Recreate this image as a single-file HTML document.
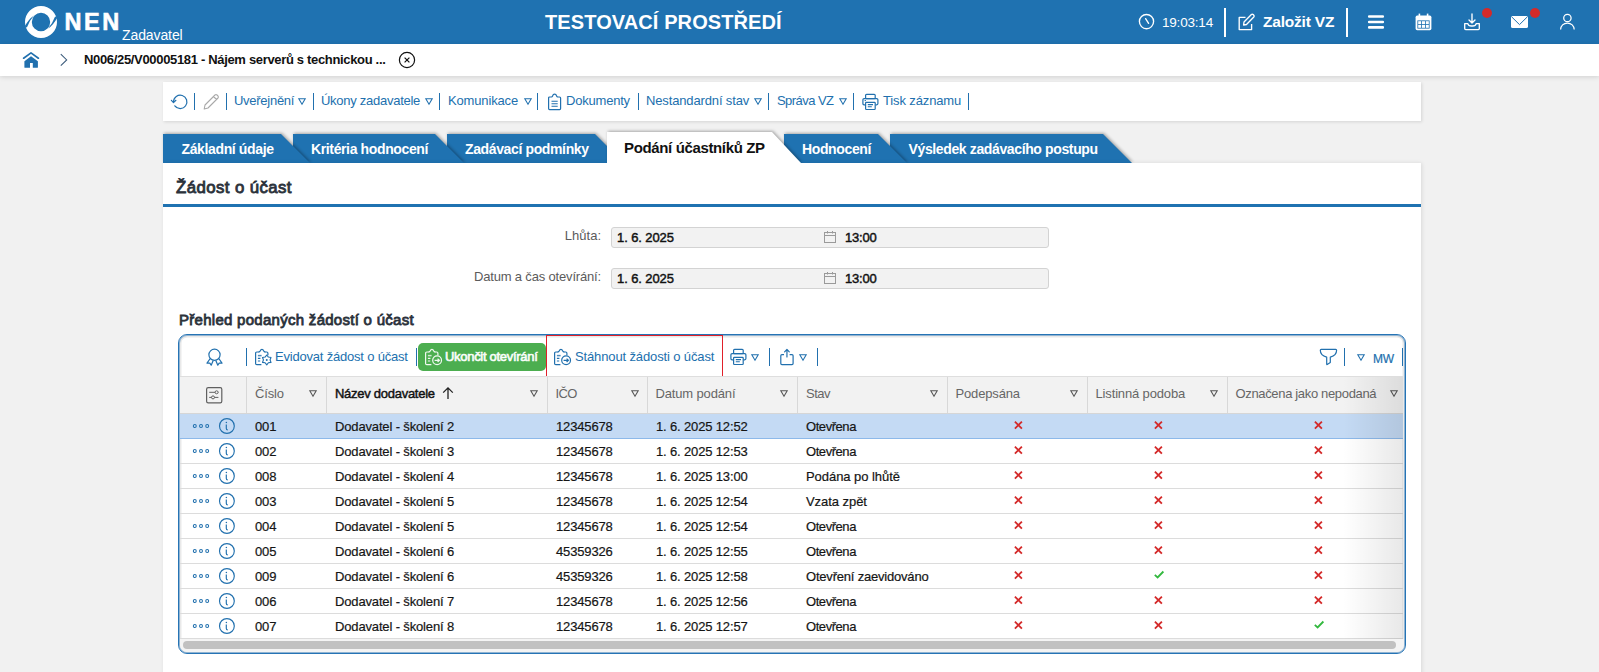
<!DOCTYPE html>
<html><head><meta charset="utf-8">
<style>
*{box-sizing:border-box;margin:0;padding:0}
html,body{width:1599px;height:672px;overflow:hidden}
body{background:#f1f1f1;font-family:"Liberation Sans",sans-serif;position:relative;color:#222}
.abs{position:absolute}
.t{white-space:nowrap}
svg{overflow:visible}
</style></head>
<body>
<div class="abs" style="left:0;top:0;width:1599px;height:44px;background:#1f72b1"></div><svg class="abs" style="left:24px;top:5px" width="34" height="34" viewBox="0 0 34 34">
<circle cx="17" cy="17" r="12.6" fill="none" stroke="#fff" stroke-width="6.8"/>
<path d="M10 10.4 Q4.6 14 0.6 21.6 L2.9 22.4 Q5.6 15.2 10 10.4 Z" fill="#1f72b1"/>
<path d="M24 23.6 Q29.4 20 33.4 12.4 L31.1 11.6 Q28.4 18.8 24 23.6 Z" fill="#1f72b1"/>
</svg><div class="abs t" style="left:64.5px;top:9.36px;font-size:23.5px;line-height:27px;color:#fff;font-weight:bold;letter-spacing:2.6px;-webkit-text-stroke:0.6px #fff;">NEN</div><div class="abs t" style="left:122px;top:27.15px;font-size:14px;line-height:16px;color:#fff;font-weight:normal;letter-spacing:-0.1px;">Zadavatel</div><div class="abs t" style="left:545px;top:10.77px;font-size:20px;line-height:23px;color:#fff;font-weight:bold;letter-spacing:0.1px;">TESTOVACÍ PROSTŘEDÍ</div><svg class="abs" style="left:1138px;top:13px" width="17" height="17" viewBox="0 0 17 17">
<circle cx="8.5" cy="8.6" r="7.1" fill="none" stroke="#fff" stroke-width="1.35"/>
<path d="M7.6 5.6 L10.6 10.4" fill="none" stroke="#fff" stroke-width="1.35" stroke-linecap="round"/>
</svg><div class="abs t" style="left:1162px;top:15.32px;font-size:13.5px;line-height:16px;color:#fff;font-weight:normal;letter-spacing:-0.2px;">19:03:14</div><div class="abs" style="left:1224px;top:8px;width:2px;height:29px;background:#fff"></div><svg class="abs" style="left:1238px;top:13px" width="18" height="18" viewBox="0 0 18 18">
<path d="M7.5 4.4 H1.2 V16.6 H13.6 V11" fill="none" stroke="#fff" stroke-width="1.35" stroke-linejoin="round"/>
<path d="M5.6 12 L6 9 L13.4 1.6 Q14.3 0.8 15.2 1.6 L15.8 2.2 Q16.6 3.1 15.8 4 L8.5 11.5 Z" fill="none" stroke="#fff" stroke-width="1.35" stroke-linejoin="round"/>
</svg><div class="abs t" style="left:1263px;top:12.63px;font-size:15.5px;line-height:18px;color:#fff;font-weight:bold;letter-spacing:-0.2px;">Založit VZ</div><div class="abs" style="left:1346px;top:8px;width:2px;height:29px;background:#fff"></div><svg class="abs" style="left:1367px;top:14px" width="18" height="16" viewBox="0 0 18 16">
<path d="M2.2 2.5 H15.8 M2.2 8 H15.8 M2.2 13.4 H15.8" stroke="#fff" stroke-width="2.6" stroke-linecap="round"/>
</svg><svg class="abs" style="left:1414px;top:13px" width="19" height="18" viewBox="0 0 19 18">
<rect x="1.6" y="2.6" width="15.8" height="14.6" rx="1.6" fill="#fff"/>
<rect x="4.6" y="0.6" width="1.6" height="4" fill="#fff"/><rect x="12.8" y="0.6" width="1.6" height="4" fill="#fff"/>
<rect x="3.4" y="7.4" width="12.2" height="8.2" fill="#1f72b1"/>
<g fill="#fff"><rect x="4.2" y="8.2" width="3" height="3"/><rect x="8" y="8.2" width="3" height="3"/><rect x="11.8" y="8.2" width="3" height="3"/>
<rect x="4.2" y="12" width="3" height="2.8"/><rect x="8" y="12" width="3" height="2.8"/><rect x="11.8" y="12" width="3" height="2.8"/></g>
</svg><svg class="abs" style="left:1463px;top:13px" width="18" height="18" viewBox="0 0 18 18">
<path d="M9 1 V10 M6 7 L9 10 L12 7" fill="none" stroke="#fff" stroke-width="1.35" stroke-linecap="round" stroke-linejoin="round"/>
<path d="M1.7 10.6 V15.6 Q1.7 16.6 2.7 16.6 H15.3 Q16.3 16.6 16.3 15.6 V10.6 H13.2 Q12.6 13 9.6 13 H8.4 Q5.4 13 4.8 10.6 Z" fill="none" stroke="#fff" stroke-width="1.35" stroke-linejoin="round"/>
</svg><div class="abs" style="left:1482px;top:8px;width:10px;height:10px;border-radius:50%;background:#d32a2a"></div><svg class="abs" style="left:1510px;top:15px" width="19" height="14" viewBox="0 0 19 14">
<rect x="1" y="1" width="17" height="12" rx="1.6" fill="#fff"/>
<path d="M1.6 1.8 L9.5 9.6 L17.4 1.8" fill="none" stroke="#1f72b1" stroke-width="1"/>
</svg><div class="abs" style="left:1530px;top:8px;width:10px;height:10px;border-radius:50%;background:#d32a2a"></div><svg class="abs" style="left:1559px;top:13px" width="18" height="18" viewBox="0 0 18 18">
<circle cx="8.4" cy="5" r="3.7" fill="none" stroke="#fff" stroke-width="1.25"/>
<path d="M1.6 16.5 A6.8 6.5 0 0 1 15.2 16.5" fill="none" stroke="#fff" stroke-width="1.25"/>
</svg><div class="abs" style="left:0;top:44px;width:1599px;height:32px;background:#fff;box-shadow:0 1px 5px rgba(0,0,0,.14)"></div><svg class="abs" style="left:22px;top:51px" width="18" height="18" viewBox="0 0 18 18">
<path d="M1.6 7.2 L9 1.9 L16.4 7.2" fill="none" stroke="#2170ae" stroke-width="1.7" stroke-linecap="round" stroke-linejoin="round"/>
<path d="M2.4 10.2 L9 5.2 L15.9 10.2 V16.2 Q15.9 16.8 15.3 16.8 H10.8 V12 H8 V16.8 H3 Q2.4 16.8 2.4 16.2 Z" fill="#2170ae"/>
</svg><svg class="abs" style="left:59px;top:53px" width="10" height="14" viewBox="0 0 10 14">
<path d="M1.8 1.1 L7.7 7 L1.8 12.6" fill="none" stroke="#3a5a7a" stroke-width="1.05"/>
</svg><div class="abs t" style="left:84px;top:51.70px;font-size:13px;line-height:15px;color:#111;font-weight:bold;letter-spacing:-0.33px;">N006/25/V00005181 - Nájem serverů s technickou ...</div><svg class="abs" style="left:398px;top:51px" width="18" height="18" viewBox="0 0 18 18">
<circle cx="9" cy="9" r="7.6" fill="none" stroke="#111" stroke-width="1.2"/>
<path d="M6.6 6.6 L11.4 11.4 M11.4 6.6 L6.6 11.4" stroke="#111" stroke-width="1.2"/>
</svg><div class="abs" style="left:163px;top:82px;width:1258px;height:39px;background:#fff;box-shadow:1px 1px 3px rgba(0,0,0,.12)"></div><svg class="abs" style="left:170px;top:93px" width="18" height="18" viewBox="0 0 18 18">
<path d="M3.5 8.8 A6.7 6.7 0 1 1 4.8 12.8" fill="none" stroke="#2170ae" stroke-width="1.2" stroke-linecap="round"/>
<path d="M1.4 7.3 L3.5 9.6 L5.9 7.3" fill="none" stroke="#2170ae" stroke-width="1.2" stroke-linecap="round" stroke-linejoin="round"/>
</svg><div class="abs" style="left:194px;top:93px;width:1px;height:17px;background:#2170ae"></div><svg class="abs" style="left:202px;top:93px" width="18" height="18" viewBox="0 0 18 18">
<path d="M2.2 16 L3 12 L13 2 Q14 1.1 15 2 L16 3 Q16.9 4 16 5 L6 15 Z M11.5 3.5 L14.5 6.5" fill="none" stroke="#a9a9a9" stroke-width="1.1" stroke-linejoin="round"/>
</svg><div class="abs" style="left:226px;top:93px;width:1px;height:17px;background:#2170ae"></div><div class="abs t" style="left:234px;top:93.00px;font-size:13px;line-height:15px;color:#2170ae;font-weight:normal;letter-spacing:-0.27px;">Uveřejnění</div><svg class="abs" style="left:298px;top:98px" width="8" height="7" viewBox="0 0 8 7"><path d="M0.8 0.8 H7.2 L4.0 6.2 Z" fill="none" stroke="#2170ae" stroke-width="1.05" stroke-linejoin="miter"/></svg><div class="abs" style="left:313px;top:93px;width:1px;height:17px;background:#2170ae"></div><div class="abs t" style="left:321px;top:93.00px;font-size:13px;line-height:15px;color:#2170ae;font-weight:normal;letter-spacing:-0.27px;">Úkony zadavatele</div><svg class="abs" style="left:425px;top:98px" width="8" height="7" viewBox="0 0 8 7"><path d="M0.8 0.8 H7.2 L4.0 6.2 Z" fill="none" stroke="#2170ae" stroke-width="1.05" stroke-linejoin="miter"/></svg><div class="abs" style="left:439px;top:93px;width:1px;height:17px;background:#2170ae"></div><div class="abs t" style="left:448px;top:93.00px;font-size:13px;line-height:15px;color:#2170ae;font-weight:normal;letter-spacing:-0.15px;">Komunikace</div><svg class="abs" style="left:524px;top:98px" width="8" height="7" viewBox="0 0 8 7"><path d="M0.8 0.8 H7.2 L4.0 6.2 Z" fill="none" stroke="#2170ae" stroke-width="1.05" stroke-linejoin="miter"/></svg><div class="abs" style="left:537px;top:93px;width:1px;height:17px;background:#2170ae"></div><svg class="abs" style="left:547px;top:93px" width="16" height="18" viewBox="0 0 16 18">
<path d="M4.4 4 H2.6 Q1.6 4 1.6 5 V15.6 Q1.6 16.6 2.6 16.6 H12.6 Q13.6 16.6 13.6 15.6 V5 Q13.6 4 12.6 4 H10.8" fill="none" stroke="#2170ae" stroke-width="1.2"/>
<path d="M4.2 4 Q5.3 4 5.6 3 Q6.1 1.2 7.6 1.2 Q9.1 1.2 9.6 3 Q9.9 4 11 4" fill="none" stroke="#2170ae" stroke-width="1.2"/>
<path d="M4.5 8.3 H10.7 M4.5 10.8 H10.7 M4.5 13.3 H10.7" stroke="#2170ae" stroke-width="1.1"/>
</svg><div class="abs t" style="left:566px;top:93.00px;font-size:13px;line-height:15px;color:#2170ae;font-weight:normal;letter-spacing:-0.21px;">Dokumenty</div><div class="abs" style="left:638px;top:93px;width:1px;height:17px;background:#2170ae"></div><div class="abs t" style="left:646px;top:93.00px;font-size:13px;line-height:15px;color:#2170ae;font-weight:normal;letter-spacing:-0.14px;">Nestandardní stav</div><svg class="abs" style="left:754px;top:98px" width="8" height="7" viewBox="0 0 8 7"><path d="M0.8 0.8 H7.2 L4.0 6.2 Z" fill="none" stroke="#2170ae" stroke-width="1.05" stroke-linejoin="miter"/></svg><div class="abs" style="left:768px;top:93px;width:1px;height:17px;background:#2170ae"></div><div class="abs t" style="left:777px;top:93.00px;font-size:13px;line-height:15px;color:#2170ae;font-weight:normal;letter-spacing:-0.55px;">Správa VZ</div><svg class="abs" style="left:839px;top:98px" width="8" height="7" viewBox="0 0 8 7"><path d="M0.8 0.8 H7.2 L4.0 6.2 Z" fill="none" stroke="#2170ae" stroke-width="1.05" stroke-linejoin="miter"/></svg><div class="abs" style="left:853px;top:93px;width:1px;height:17px;background:#2170ae"></div><svg class="abs" style="left:862px;top:93px" width="17" height="18" viewBox="0 0 17 18"><rect x="3.6" y="1.3" width="9.6" height="4.4" rx="1" fill="none" stroke="#2170ae" stroke-width="1.2"/><path d="M3.5 11.8 H2.1 Q0.9 11.8 0.9 10.6 V6.8 Q0.9 5.6 2.1 5.6 H14.7 Q15.9 5.6 15.9 6.8 V10.6 Q15.9 11.8 14.7 11.8 H13.3" fill="none" stroke="#2170ae" stroke-width="1.2"/><rect x="3.6" y="9.3" width="9.6" height="7.2" rx="0.8" fill="#fff" stroke="#2170ae" stroke-width="1.2"/><path d="M5.8 11.6 H11 M5.8 13.8 H9.8" stroke="#2170ae" stroke-width="1.1"/><path d="M2.6 7.6 H4" stroke="#2170ae" stroke-width="1"/></svg><div class="abs t" style="left:883px;top:93.00px;font-size:13px;line-height:15px;color:#2170ae;font-weight:normal;letter-spacing:-0.13px;">Tisk záznamu</div><div class="abs" style="left:968px;top:93px;width:1px;height:17px;background:#2170ae"></div><svg class="abs" style="left:163px;top:134px;z-index:20;filter:drop-shadow(1.5px -1px 1.5px rgba(0,0,0,.3))" width="147" height="29" viewBox="0 0 147 29"><path d="M0 0 H118 L147 29 H0 Z" fill="#1f72b1"/></svg><div class="abs t" style="left:181.5px;top:141.15px;font-size:14px;line-height:16px;color:#fff;font-weight:bold;letter-spacing:-0.37px;z-index:21">Základní údaje</div><svg class="abs" style="left:293px;top:134px;z-index:19;filter:drop-shadow(1.5px -1px 1.5px rgba(0,0,0,.3))" width="171" height="29" viewBox="0 0 171 29"><path d="M0 0 H142 L171 29 H0 Z" fill="#1f72b1"/></svg><div class="abs t" style="left:311px;top:141.15px;font-size:14px;line-height:16px;color:#fff;font-weight:bold;letter-spacing:-0.37px;z-index:20">Kritéria hodnocení</div><svg class="abs" style="left:447px;top:134px;z-index:18;filter:drop-shadow(1.5px -1px 1.5px rgba(0,0,0,.3))" width="177" height="29" viewBox="0 0 177 29"><path d="M0 0 H148 L177 29 H0 Z" fill="#1f72b1"/></svg><div class="abs t" style="left:465px;top:141.15px;font-size:14px;line-height:16px;color:#fff;font-weight:bold;letter-spacing:-0.37px;z-index:19">Zadávací podmínky</div><svg class="abs" style="left:607px;top:132px;z-index:50;filter:drop-shadow(1.5px -1px 1.5px rgba(0,0,0,.3))" width="194" height="31" viewBox="0 0 194 31"><path d="M0 0 H165 L194 31 H0 Z" fill="#fff"/></svg><div class="abs t" style="left:624px;top:139.30px;font-size:15px;line-height:17px;color:#111;font-weight:bold;letter-spacing:-0.36px;z-index:51">Podání účastníků ZP</div><svg class="abs" style="left:784px;top:134px;z-index:16;filter:drop-shadow(1.5px -1px 1.5px rgba(0,0,0,.3))" width="123" height="29" viewBox="0 0 123 29"><path d="M0 0 H94 L123 29 H0 Z" fill="#1f72b1"/></svg><div class="abs t" style="left:802px;top:141.15px;font-size:14px;line-height:16px;color:#fff;font-weight:bold;letter-spacing:-0.37px;z-index:17">Hodnocení</div><svg class="abs" style="left:890px;top:134px;z-index:15;filter:drop-shadow(1.5px -1px 1.5px rgba(0,0,0,.3))" width="242" height="29" viewBox="0 0 242 29"><path d="M0 0 H213 L242 29 H0 Z" fill="#1f72b1"/></svg><div class="abs t" style="left:908.5px;top:141.15px;font-size:14px;line-height:16px;color:#fff;font-weight:bold;letter-spacing:-0.37px;z-index:16">Výsledek zadávacího postupu</div><div class="abs" style="left:600px;top:163px;width:215px;height:4px;background:#fff;z-index:52"></div><div class="abs" style="left:163px;top:163px;width:1258px;height:520px;background:#fff;box-shadow:1px 0 4px rgba(0,0,0,.1);z-index:30"></div><div class="abs t" style="z-index:40;left:176px;top:178.43px;font-size:16.8px;line-height:19px;color:#2b323b;font-weight:normal;letter-spacing:0.42px;-webkit-text-stroke:0.85px #2b323b;">Žádost o účast</div><div class="abs" style="z-index:40;left:163px;top:204px;width:1258px;height:3px;background:#1f72b1"></div><div class="abs t" style="z-index:40;right:998px;top:228.30px;font-size:13px;line-height:15px;color:#5b5b5b;font-weight:normal;letter-spacing:0px;text-align:right">Lhůta:</div><div class="abs t" style="z-index:40;right:998px;top:268.80px;font-size:13px;line-height:15px;color:#5b5b5b;font-weight:normal;letter-spacing:-0.17px;text-align:right">Datum a čas otevírání:</div><div class="abs" style="z-index:40;left:611px;top:227px;width:438px;height:21px;background:#f2f2f2;border:1px solid #d3d3d3;border-radius:3px"></div><div class="abs t" style="z-index:40;left:617px;top:229.80px;font-size:13px;line-height:15px;color:#111;font-weight:normal;letter-spacing:-0.1px;-webkit-text-stroke:0.45px #111;">1. 6. 2025</div><svg class="abs" style="z-index:40;left:823px;top:230px" width="14" height="14" viewBox="0 0 14 14"><rect x="1.5" y="2.5" width="11" height="10" fill="none" stroke="#9a9a9a" stroke-width="1"/><path d="M1.5 5.5 H12.5 M4.5 1 V3.5 M9.5 1 V3.5" stroke="#9a9a9a" stroke-width="1"/></svg><div class="abs t" style="z-index:40;left:845px;top:229.80px;font-size:13px;line-height:15px;color:#111;font-weight:normal;letter-spacing:-0.2px;-webkit-text-stroke:0.45px #111;">13:00</div><div class="abs" style="z-index:40;left:611px;top:268px;width:438px;height:21px;background:#f2f2f2;border:1px solid #d3d3d3;border-radius:3px"></div><div class="abs t" style="z-index:40;left:617px;top:271.00px;font-size:13px;line-height:15px;color:#111;font-weight:normal;letter-spacing:-0.1px;-webkit-text-stroke:0.45px #111;">1. 6. 2025</div><svg class="abs" style="z-index:40;left:823px;top:271px" width="14" height="14" viewBox="0 0 14 14"><rect x="1.5" y="2.5" width="11" height="10" fill="none" stroke="#9a9a9a" stroke-width="1"/><path d="M1.5 5.5 H12.5 M4.5 1 V3.5 M9.5 1 V3.5" stroke="#9a9a9a" stroke-width="1"/></svg><div class="abs t" style="z-index:40;left:845px;top:271.00px;font-size:13px;line-height:15px;color:#111;font-weight:normal;letter-spacing:-0.2px;-webkit-text-stroke:0.45px #111;">13:00</div><div class="abs t" style="z-index:40;left:179px;top:311.00px;font-size:15px;line-height:17px;color:#2b323b;font-weight:normal;letter-spacing:0.28px;-webkit-text-stroke:0.8px #2b323b;">Přehled podaných žádostí o účast</div><div class="abs" style="z-index:40;left:178px;top:334px;width:1228px;height:320px;border:1px solid #2674b5;border-radius:9px;background:#fff;overflow:hidden;box-shadow:inset 0 0 0 1px rgba(38,116,181,.45),inset 0 0 0 2.5px #e9e9e9"></div><svg class="abs" style="z-index:40;left:205px;top:348px" width="19" height="18" viewBox="0 0 19 18"><circle cx="9.5" cy="6.8" r="5.6" fill="none" stroke="#2170ae" stroke-width="1.2"/><path d="M5.2 10.5 L2 15.2 L4.8 15.2 L6.2 17.2 L8.2 12.6 M13.8 10.5 L17 15.2 L14.2 15.2 L12.8 17.2 L10.8 12.6" fill="none" stroke="#2170ae" stroke-width="1.2" stroke-linejoin="round"/></svg><div class="abs" style="z-index:40;left:246px;top:348px;width:1px;height:18px;background:#2170ae"></div><svg class="abs" style="z-index:40;left:254px;top:348px" width="19" height="18" viewBox="0 0 19 18"><path d="M5.2 4 H2.8 Q1.6 4 1.6 5.2 V15.5 Q1.6 16.7 2.8 16.7 H7.4" fill="none" stroke="#2170ae" stroke-width="1.2"/><path d="M10.6 4 H12.7 Q13.9 4 13.9 5.2 V7.2" fill="none" stroke="#2170ae" stroke-width="1.2"/><path d="M4.6 4 Q5.8 4 6.3 2.8 Q6.8 1.3 7.95 1.3 Q9.1 1.3 9.6 2.8 Q10.1 4 11.3 4" fill="none" stroke="#2170ae" stroke-width="1.2"/><path d="M3.9 7.6 H7.6" stroke="#2170ae" stroke-width="1.5" opacity=".8"/><path d="M3.9 10.4 H6.4 M3.9 13 H6.2" stroke="#2170ae" stroke-width="1.2"/><path d="M12.75 7.00 L14.40 9.04 L16.99 9.45 L16.05 11.90 L16.99 14.35 L14.40 14.76 L12.75 16.80 L11.10 14.76 L8.51 14.35 L9.45 11.90 L8.51 9.45 L11.10 9.04 Z" fill="none" stroke="#2170ae" stroke-width="1.15" stroke-linejoin="round"/><circle cx="12.75" cy="11.9" r="1" fill="#2170ae"/></svg><div class="abs t" style="z-index:40;left:275px;top:349.00px;font-size:13px;line-height:15px;color:#2170ae;font-weight:normal;letter-spacing:-0.2px;">Evidovat žádost o účast</div><div class="abs" style="z-index:40;left:416px;top:348px;width:1px;height:18px;background:#2170ae"></div><div class="abs" style="z-index:40;left:418px;top:343px;width:128px;height:28px;background:#4cae50;border-radius:5px"></div><svg class="abs" style="z-index:40;left:424px;top:348px" width="19" height="18" viewBox="0 0 19 18"><path d="M5.2 4 H2.8 Q1.6 4 1.6 5.2 V15.5 Q1.6 16.7 2.8 16.7 H7.4" fill="none" stroke="rgba(255,255,255,.92)" stroke-width="1.2"/><path d="M10.6 4 H12.7 Q13.9 4 13.9 5.2 V7.2" fill="none" stroke="rgba(255,255,255,.92)" stroke-width="1.2"/><path d="M4.6 4 Q5.8 4 6.3 2.8 Q6.8 1.3 7.95 1.3 Q9.1 1.3 9.6 2.8 Q10.1 4 11.3 4" fill="none" stroke="rgba(255,255,255,.92)" stroke-width="1.2"/><path d="M3.9 7.6 H7.6" stroke="rgba(255,255,255,.92)" stroke-width="1.5" opacity=".8"/><path d="M3.9 10.4 H6.4 M3.9 13 H6.2" stroke="rgba(255,255,255,.92)" stroke-width="1.2"/><circle cx="13.1" cy="12.3" r="4.4" fill="none" stroke="rgba(255,255,255,.92)" stroke-width="1.2"/><path d="M10.6 12.3 H15.4 M13.6 10.6 L15.4 12.3 L13.6 14" fill="none" stroke="rgba(255,255,255,.92)" stroke-width="1.2"/></svg><div class="abs t" style="z-index:40;left:445px;top:349.00px;font-size:13px;line-height:15px;color:rgba(255,255,255,.93);font-weight:normal;letter-spacing:-0.3px;-webkit-text-stroke:0.7px rgba(255,255,255,.93);">Ukončit otevírání</div><div class="abs" style="z-index:40;left:546px;top:335px;width:177px;height:42px;border:1px solid #e0202a"></div><svg class="abs" style="z-index:40;left:553px;top:348px" width="19" height="18" viewBox="0 0 19 18"><path d="M5.2 4 H2.8 Q1.6 4 1.6 5.2 V15.5 Q1.6 16.7 2.8 16.7 H7.4" fill="none" stroke="#2170ae" stroke-width="1.2"/><path d="M10.6 4 H12.7 Q13.9 4 13.9 5.2 V7.2" fill="none" stroke="#2170ae" stroke-width="1.2"/><path d="M4.6 4 Q5.8 4 6.3 2.8 Q6.8 1.3 7.95 1.3 Q9.1 1.3 9.6 2.8 Q10.1 4 11.3 4" fill="none" stroke="#2170ae" stroke-width="1.2"/><path d="M3.9 7.6 H7.6" stroke="#2170ae" stroke-width="1.5" opacity=".8"/><path d="M3.9 10.4 H6.4 M3.9 13 H6.2" stroke="#2170ae" stroke-width="1.2"/><circle cx="13.1" cy="12.3" r="4.4" fill="none" stroke="#2170ae" stroke-width="1.2"/><path d="M10.6 12.3 H15.4 M13.6 10.6 L15.4 12.3 L13.6 14" fill="none" stroke="#2170ae" stroke-width="1.2"/></svg><div class="abs t" style="z-index:40;left:575px;top:349.00px;font-size:13px;line-height:15px;color:#2170ae;font-weight:normal;letter-spacing:-0.13px;">Stáhnout žádosti o účast</div><svg class="abs" style="z-index:40;left:730px;top:348px" width="17" height="18" viewBox="0 0 17 18"><rect x="3.6" y="1.3" width="9.6" height="4.4" rx="1" fill="none" stroke="#2170ae" stroke-width="1.2"/><path d="M3.5 11.8 H2.1 Q0.9 11.8 0.9 10.6 V6.8 Q0.9 5.6 2.1 5.6 H14.7 Q15.9 5.6 15.9 6.8 V10.6 Q15.9 11.8 14.7 11.8 H13.3" fill="none" stroke="#2170ae" stroke-width="1.2"/><rect x="3.6" y="9.3" width="9.6" height="7.2" rx="0.8" fill="#fff" stroke="#2170ae" stroke-width="1.2"/><path d="M5.8 11.6 H11 M5.8 13.8 H9.8" stroke="#2170ae" stroke-width="1.1"/></svg><svg class="abs" style="z-index:40;left:751px;top:354px" width="8" height="7" viewBox="0 0 8 7"><path d="M0.8 0.8 H7.2 L4.0 6.2 Z" fill="none" stroke="#2170ae" stroke-width="1.05" stroke-linejoin="miter"/></svg><div class="abs" style="z-index:40;left:769px;top:348px;width:1px;height:18px;background:#2170ae"></div><svg class="abs" style="z-index:40;left:780px;top:348px" width="15" height="18" viewBox="0 0 15 18"><path d="M4 6.7 H1.9 Q0.8 6.7 0.8 7.8 V15.6 Q0.8 16.6 1.9 16.6 H12 Q13.1 16.6 13.1 15.6 V7.8 Q13.1 6.7 12 6.7 H9.6" fill="none" stroke="#2170ae" stroke-width="1.2"/><path d="M6.95 9 V1.6 M4.6 3.9 L6.95 1.5 L9.3 3.9" fill="none" stroke="#2170ae" stroke-width="1.2" stroke-linecap="round" stroke-linejoin="round"/></svg><svg class="abs" style="z-index:40;left:799px;top:354px" width="8" height="7" viewBox="0 0 8 7"><path d="M0.8 0.8 H7.2 L4.0 6.2 Z" fill="none" stroke="#2170ae" stroke-width="1.05" stroke-linejoin="miter"/></svg><div class="abs" style="z-index:40;left:817px;top:348px;width:1px;height:18px;background:#2170ae"></div><svg class="abs" style="z-index:40;left:1319px;top:348px" width="19" height="18" viewBox="0 0 19 18"><path d="M2.2 1.4 H16.7 Q17.6 1.4 17.6 2.3 C17.6 6 14.8 8.2 11.3 9.2 V14.6 L8.2 16.5 Q7.7 16.7 7.7 16.1 V9.2 C4.2 8.2 1.3 6 1.3 2.3 Q1.3 1.4 2.2 1.4 Z" fill="none" stroke="#2170ae" stroke-width="1.2" stroke-linejoin="round"/></svg><div class="abs" style="z-index:40;left:1344px;top:348px;width:1px;height:18px;background:#2170ae"></div><svg class="abs" style="z-index:40;left:1357px;top:354px" width="8" height="7" viewBox="0 0 8 7"><path d="M0.8 0.8 H7.2 L4.0 6.2 Z" fill="none" stroke="#2170ae" stroke-width="1.05" stroke-linejoin="miter"/></svg><div class="abs t" style="z-index:40;left:1373px;top:351.84px;font-size:12px;line-height:14px;color:#2170ae;font-weight:normal;letter-spacing:-0.2px;-webkit-text-stroke:0.2px #2170ae;">MW</div><div class="abs" style="z-index:40;left:1402px;top:348px;width:1px;height:18px;background:#2170ae"></div><div class="abs" style="z-index:40;left:180px;top:376px;width:1223px;height:38px;background:#f2f2f2;border-top:1px solid #dedede;border-bottom:1px solid #d6d6d6"></div><div class="abs" style="z-index:40;left:246px;top:377px;width:1px;height:36px;background:#d8d8d8"></div><div class="abs" style="z-index:40;left:326px;top:377px;width:1px;height:36px;background:#d8d8d8"></div><div class="abs" style="z-index:40;left:547px;top:377px;width:1px;height:36px;background:#d8d8d8"></div><div class="abs" style="z-index:40;left:647px;top:377px;width:1px;height:36px;background:#d8d8d8"></div><div class="abs" style="z-index:40;left:797px;top:377px;width:1px;height:36px;background:#d8d8d8"></div><div class="abs" style="z-index:40;left:947px;top:377px;width:1px;height:36px;background:#d8d8d8"></div><div class="abs" style="z-index:40;left:1087px;top:377px;width:1px;height:36px;background:#d8d8d8"></div><div class="abs" style="z-index:40;left:1227px;top:377px;width:1px;height:36px;background:#d8d8d8"></div><svg class="abs" style="z-index:40;left:206px;top:387px" width="17" height="17" viewBox="0 0 17 17"><rect x="0.6" y="0.6" width="15.2" height="15.2" rx="1.6" fill="none" stroke="#606060" stroke-width="1.2"/><path d="M3.2 5.3 H12.4 M3.2 10.4 H12.4" stroke="#606060" stroke-width="1"/><circle cx="10.6" cy="5.3" r="1.5" fill="#f2f2f2" stroke="#606060" stroke-width="1"/><circle cx="7" cy="10.4" r="1.5" fill="#f2f2f2" stroke="#606060" stroke-width="1"/></svg><div class="abs t" style="z-index:40;left:255px;top:386.00px;font-size:13px;line-height:15px;color:#666;font-weight:normal;letter-spacing:-0.15px;">Číslo</div><svg class="abs" style="z-index:40;left:309px;top:390px" width="8" height="7" viewBox="0 0 8 7"><path d="M0.8 0.8 H7.2 L4.0 6.2 Z" fill="none" stroke="#555" stroke-width="1.05" stroke-linejoin="miter"/></svg><svg class="abs" style="z-index:40;left:530px;top:390px" width="8" height="7" viewBox="0 0 8 7"><path d="M0.8 0.8 H7.2 L4.0 6.2 Z" fill="none" stroke="#555" stroke-width="1.05" stroke-linejoin="miter"/></svg><div class="abs t" style="z-index:40;left:555.5px;top:386.00px;font-size:13px;line-height:15px;color:#666;font-weight:normal;letter-spacing:-0.6px;">IČO</div><svg class="abs" style="z-index:40;left:631px;top:390px" width="8" height="7" viewBox="0 0 8 7"><path d="M0.8 0.8 H7.2 L4.0 6.2 Z" fill="none" stroke="#555" stroke-width="1.05" stroke-linejoin="miter"/></svg><div class="abs t" style="z-index:40;left:655.5px;top:386.00px;font-size:13px;line-height:15px;color:#666;font-weight:normal;letter-spacing:-0.15px;">Datum podání</div><svg class="abs" style="z-index:40;left:780px;top:390px" width="8" height="7" viewBox="0 0 8 7"><path d="M0.8 0.8 H7.2 L4.0 6.2 Z" fill="none" stroke="#555" stroke-width="1.05" stroke-linejoin="miter"/></svg><div class="abs t" style="z-index:40;left:806px;top:386.00px;font-size:13px;line-height:15px;color:#666;font-weight:normal;letter-spacing:-0.5px;">Stav</div><svg class="abs" style="z-index:40;left:930px;top:390px" width="8" height="7" viewBox="0 0 8 7"><path d="M0.8 0.8 H7.2 L4.0 6.2 Z" fill="none" stroke="#555" stroke-width="1.05" stroke-linejoin="miter"/></svg><div class="abs t" style="z-index:40;left:955.5px;top:386.00px;font-size:13px;line-height:15px;color:#666;font-weight:normal;letter-spacing:-0.15px;">Podepsána</div><svg class="abs" style="z-index:40;left:1070px;top:390px" width="8" height="7" viewBox="0 0 8 7"><path d="M0.8 0.8 H7.2 L4.0 6.2 Z" fill="none" stroke="#555" stroke-width="1.05" stroke-linejoin="miter"/></svg><div class="abs t" style="z-index:40;left:1095.5px;top:386.00px;font-size:13px;line-height:15px;color:#666;font-weight:normal;letter-spacing:-0.15px;">Listinná podoba</div><svg class="abs" style="z-index:40;left:1210px;top:390px" width="8" height="7" viewBox="0 0 8 7"><path d="M0.8 0.8 H7.2 L4.0 6.2 Z" fill="none" stroke="#555" stroke-width="1.05" stroke-linejoin="miter"/></svg><div class="abs t" style="z-index:40;left:1235.5px;top:386.00px;font-size:13px;line-height:15px;color:#666;font-weight:normal;letter-spacing:-0.34px;">Označena jako nepodaná</div><svg class="abs" style="z-index:40;left:1390px;top:390px" width="8" height="7" viewBox="0 0 8 7"><path d="M0.8 0.8 H7.2 L4.0 6.2 Z" fill="none" stroke="#555" stroke-width="1.05" stroke-linejoin="miter"/></svg><div class="abs t" style="z-index:40;left:335px;top:386.00px;font-size:13px;line-height:15px;color:#111;font-weight:normal;letter-spacing:-0.27px;-webkit-text-stroke:0.45px #111;">Název dodavatele</div><svg class="abs" style="z-index:40;left:441px;top:386px" width="14" height="14" viewBox="0 0 14 14"><path d="M7 13 V1.8 M2.2 6.6 L7 1.8 L11.8 6.6" fill="none" stroke="#222" stroke-width="1.3"/></svg><div class="abs" style="z-index:40;left:180px;top:414px;width:1223px;height:25px;background:#c4daf4;border-bottom:1px solid #8db9ea"></div><svg class="abs" style="z-index:40;left:192px;top:422px" width="18" height="8" viewBox="0 0 18 8"><circle cx="2.8" cy="4" r="1.45" fill="none" stroke="#2170ae" stroke-width="1.05"/><circle cx="9" cy="4" r="1.45" fill="none" stroke="#2170ae" stroke-width="1.05"/><circle cx="15.2" cy="4" r="1.45" fill="none" stroke="#2170ae" stroke-width="1.05"/></svg><svg class="abs" style="z-index:40;left:218px;top:418px" width="18" height="18" viewBox="0 0 18 18"><circle cx="8.9" cy="8" r="7.4" fill="none" stroke="#2170ae" stroke-width="1.15"/><circle cx="8.4" cy="4.4" r="0.75" fill="#2170ae"/><path d="M8.3 6.6 V10.6 Q8.3 11.9 9.8 12" fill="none" stroke="#2170ae" stroke-width="1.15"/></svg><div class="abs t" style="z-index:40;left:255px;top:419.25px;font-size:13px;line-height:15px;color:#151515;font-weight:normal;letter-spacing:-0.15px;-webkit-text-stroke:0.2px #151515;">001</div><div class="abs t" style="z-index:40;left:335px;top:419.25px;font-size:13px;line-height:15px;color:#151515;font-weight:normal;letter-spacing:-0.15px;-webkit-text-stroke:0.2px #151515;">Dodavatel - školení 2</div><div class="abs t" style="z-index:40;left:556px;top:419.25px;font-size:13px;line-height:15px;color:#151515;font-weight:normal;letter-spacing:-0.15px;-webkit-text-stroke:0.2px #151515;">12345678</div><div class="abs t" style="z-index:40;left:656px;top:419.25px;font-size:13px;line-height:15px;color:#151515;font-weight:normal;letter-spacing:-0.15px;-webkit-text-stroke:0.2px #151515;">1. 6. 2025 12:52</div><div class="abs t" style="z-index:40;left:806px;top:419.25px;font-size:13px;line-height:15px;color:#151515;font-weight:normal;letter-spacing:-0.44px;-webkit-text-stroke:0.2px #151515;">Otevřena</div><svg class="abs" style="z-index:40;left:1013px;top:420px" width="10" height="10" viewBox="0 0 10 10"><path d="M1.9 1.6 L8.9 8.6 M8.9 1.6 L1.9 8.6" stroke="#d42a2a" stroke-width="1.85"/></svg><svg class="abs" style="z-index:40;left:1153px;top:420px" width="10" height="10" viewBox="0 0 10 10"><path d="M1.9 1.6 L8.9 8.6 M8.9 1.6 L1.9 8.6" stroke="#d42a2a" stroke-width="1.85"/></svg><svg class="abs" style="z-index:40;left:1313px;top:420px" width="10" height="10" viewBox="0 0 10 10"><path d="M1.9 1.6 L8.9 8.6 M8.9 1.6 L1.9 8.6" stroke="#d42a2a" stroke-width="1.85"/></svg><div class="abs" style="z-index:40;left:180px;top:439px;width:1223px;height:25px;border-bottom:1px solid #dcdcdc"></div><svg class="abs" style="z-index:40;left:192px;top:447px" width="18" height="8" viewBox="0 0 18 8"><circle cx="2.8" cy="4" r="1.45" fill="none" stroke="#2170ae" stroke-width="1.05"/><circle cx="9" cy="4" r="1.45" fill="none" stroke="#2170ae" stroke-width="1.05"/><circle cx="15.2" cy="4" r="1.45" fill="none" stroke="#2170ae" stroke-width="1.05"/></svg><svg class="abs" style="z-index:40;left:218px;top:443px" width="18" height="18" viewBox="0 0 18 18"><circle cx="8.9" cy="8" r="7.4" fill="none" stroke="#2170ae" stroke-width="1.15"/><circle cx="8.4" cy="4.4" r="0.75" fill="#2170ae"/><path d="M8.3 6.6 V10.6 Q8.3 11.9 9.8 12" fill="none" stroke="#2170ae" stroke-width="1.15"/></svg><div class="abs t" style="z-index:40;left:255px;top:444.25px;font-size:13px;line-height:15px;color:#151515;font-weight:normal;letter-spacing:-0.15px;-webkit-text-stroke:0.2px #151515;">002</div><div class="abs t" style="z-index:40;left:335px;top:444.25px;font-size:13px;line-height:15px;color:#151515;font-weight:normal;letter-spacing:-0.15px;-webkit-text-stroke:0.2px #151515;">Dodavatel - školení 3</div><div class="abs t" style="z-index:40;left:556px;top:444.25px;font-size:13px;line-height:15px;color:#151515;font-weight:normal;letter-spacing:-0.15px;-webkit-text-stroke:0.2px #151515;">12345678</div><div class="abs t" style="z-index:40;left:656px;top:444.25px;font-size:13px;line-height:15px;color:#151515;font-weight:normal;letter-spacing:-0.15px;-webkit-text-stroke:0.2px #151515;">1. 6. 2025 12:53</div><div class="abs t" style="z-index:40;left:806px;top:444.25px;font-size:13px;line-height:15px;color:#151515;font-weight:normal;letter-spacing:-0.44px;-webkit-text-stroke:0.2px #151515;">Otevřena</div><svg class="abs" style="z-index:40;left:1013px;top:445px" width="10" height="10" viewBox="0 0 10 10"><path d="M1.9 1.6 L8.9 8.6 M8.9 1.6 L1.9 8.6" stroke="#d42a2a" stroke-width="1.85"/></svg><svg class="abs" style="z-index:40;left:1153px;top:445px" width="10" height="10" viewBox="0 0 10 10"><path d="M1.9 1.6 L8.9 8.6 M8.9 1.6 L1.9 8.6" stroke="#d42a2a" stroke-width="1.85"/></svg><svg class="abs" style="z-index:40;left:1313px;top:445px" width="10" height="10" viewBox="0 0 10 10"><path d="M1.9 1.6 L8.9 8.6 M8.9 1.6 L1.9 8.6" stroke="#d42a2a" stroke-width="1.85"/></svg><div class="abs" style="z-index:40;left:180px;top:464px;width:1223px;height:25px;border-bottom:1px solid #dcdcdc"></div><svg class="abs" style="z-index:40;left:192px;top:472px" width="18" height="8" viewBox="0 0 18 8"><circle cx="2.8" cy="4" r="1.45" fill="none" stroke="#2170ae" stroke-width="1.05"/><circle cx="9" cy="4" r="1.45" fill="none" stroke="#2170ae" stroke-width="1.05"/><circle cx="15.2" cy="4" r="1.45" fill="none" stroke="#2170ae" stroke-width="1.05"/></svg><svg class="abs" style="z-index:40;left:218px;top:468px" width="18" height="18" viewBox="0 0 18 18"><circle cx="8.9" cy="8" r="7.4" fill="none" stroke="#2170ae" stroke-width="1.15"/><circle cx="8.4" cy="4.4" r="0.75" fill="#2170ae"/><path d="M8.3 6.6 V10.6 Q8.3 11.9 9.8 12" fill="none" stroke="#2170ae" stroke-width="1.15"/></svg><div class="abs t" style="z-index:40;left:255px;top:469.25px;font-size:13px;line-height:15px;color:#151515;font-weight:normal;letter-spacing:-0.15px;-webkit-text-stroke:0.2px #151515;">008</div><div class="abs t" style="z-index:40;left:335px;top:469.25px;font-size:13px;line-height:15px;color:#151515;font-weight:normal;letter-spacing:-0.15px;-webkit-text-stroke:0.2px #151515;">Dodavatel - školení 4</div><div class="abs t" style="z-index:40;left:556px;top:469.25px;font-size:13px;line-height:15px;color:#151515;font-weight:normal;letter-spacing:-0.15px;-webkit-text-stroke:0.2px #151515;">12345678</div><div class="abs t" style="z-index:40;left:656px;top:469.25px;font-size:13px;line-height:15px;color:#151515;font-weight:normal;letter-spacing:-0.15px;-webkit-text-stroke:0.2px #151515;">1. 6. 2025 13:00</div><div class="abs t" style="z-index:40;left:806px;top:469.25px;font-size:13px;line-height:15px;color:#151515;font-weight:normal;letter-spacing:-0.05px;-webkit-text-stroke:0.2px #151515;">Podána po lhůtě</div><svg class="abs" style="z-index:40;left:1013px;top:470px" width="10" height="10" viewBox="0 0 10 10"><path d="M1.9 1.6 L8.9 8.6 M8.9 1.6 L1.9 8.6" stroke="#d42a2a" stroke-width="1.85"/></svg><svg class="abs" style="z-index:40;left:1153px;top:470px" width="10" height="10" viewBox="0 0 10 10"><path d="M1.9 1.6 L8.9 8.6 M8.9 1.6 L1.9 8.6" stroke="#d42a2a" stroke-width="1.85"/></svg><svg class="abs" style="z-index:40;left:1313px;top:470px" width="10" height="10" viewBox="0 0 10 10"><path d="M1.9 1.6 L8.9 8.6 M8.9 1.6 L1.9 8.6" stroke="#d42a2a" stroke-width="1.85"/></svg><div class="abs" style="z-index:40;left:180px;top:489px;width:1223px;height:25px;border-bottom:1px solid #dcdcdc"></div><svg class="abs" style="z-index:40;left:192px;top:497px" width="18" height="8" viewBox="0 0 18 8"><circle cx="2.8" cy="4" r="1.45" fill="none" stroke="#2170ae" stroke-width="1.05"/><circle cx="9" cy="4" r="1.45" fill="none" stroke="#2170ae" stroke-width="1.05"/><circle cx="15.2" cy="4" r="1.45" fill="none" stroke="#2170ae" stroke-width="1.05"/></svg><svg class="abs" style="z-index:40;left:218px;top:493px" width="18" height="18" viewBox="0 0 18 18"><circle cx="8.9" cy="8" r="7.4" fill="none" stroke="#2170ae" stroke-width="1.15"/><circle cx="8.4" cy="4.4" r="0.75" fill="#2170ae"/><path d="M8.3 6.6 V10.6 Q8.3 11.9 9.8 12" fill="none" stroke="#2170ae" stroke-width="1.15"/></svg><div class="abs t" style="z-index:40;left:255px;top:494.25px;font-size:13px;line-height:15px;color:#151515;font-weight:normal;letter-spacing:-0.15px;-webkit-text-stroke:0.2px #151515;">003</div><div class="abs t" style="z-index:40;left:335px;top:494.25px;font-size:13px;line-height:15px;color:#151515;font-weight:normal;letter-spacing:-0.15px;-webkit-text-stroke:0.2px #151515;">Dodavatel - školení 5</div><div class="abs t" style="z-index:40;left:556px;top:494.25px;font-size:13px;line-height:15px;color:#151515;font-weight:normal;letter-spacing:-0.15px;-webkit-text-stroke:0.2px #151515;">12345678</div><div class="abs t" style="z-index:40;left:656px;top:494.25px;font-size:13px;line-height:15px;color:#151515;font-weight:normal;letter-spacing:-0.15px;-webkit-text-stroke:0.2px #151515;">1. 6. 2025 12:54</div><div class="abs t" style="z-index:40;left:806px;top:494.25px;font-size:13px;line-height:15px;color:#151515;font-weight:normal;letter-spacing:-0.05px;-webkit-text-stroke:0.2px #151515;">Vzata zpět</div><svg class="abs" style="z-index:40;left:1013px;top:495px" width="10" height="10" viewBox="0 0 10 10"><path d="M1.9 1.6 L8.9 8.6 M8.9 1.6 L1.9 8.6" stroke="#d42a2a" stroke-width="1.85"/></svg><svg class="abs" style="z-index:40;left:1153px;top:495px" width="10" height="10" viewBox="0 0 10 10"><path d="M1.9 1.6 L8.9 8.6 M8.9 1.6 L1.9 8.6" stroke="#d42a2a" stroke-width="1.85"/></svg><svg class="abs" style="z-index:40;left:1313px;top:495px" width="10" height="10" viewBox="0 0 10 10"><path d="M1.9 1.6 L8.9 8.6 M8.9 1.6 L1.9 8.6" stroke="#d42a2a" stroke-width="1.85"/></svg><div class="abs" style="z-index:40;left:180px;top:514px;width:1223px;height:25px;border-bottom:1px solid #dcdcdc"></div><svg class="abs" style="z-index:40;left:192px;top:522px" width="18" height="8" viewBox="0 0 18 8"><circle cx="2.8" cy="4" r="1.45" fill="none" stroke="#2170ae" stroke-width="1.05"/><circle cx="9" cy="4" r="1.45" fill="none" stroke="#2170ae" stroke-width="1.05"/><circle cx="15.2" cy="4" r="1.45" fill="none" stroke="#2170ae" stroke-width="1.05"/></svg><svg class="abs" style="z-index:40;left:218px;top:518px" width="18" height="18" viewBox="0 0 18 18"><circle cx="8.9" cy="8" r="7.4" fill="none" stroke="#2170ae" stroke-width="1.15"/><circle cx="8.4" cy="4.4" r="0.75" fill="#2170ae"/><path d="M8.3 6.6 V10.6 Q8.3 11.9 9.8 12" fill="none" stroke="#2170ae" stroke-width="1.15"/></svg><div class="abs t" style="z-index:40;left:255px;top:519.25px;font-size:13px;line-height:15px;color:#151515;font-weight:normal;letter-spacing:-0.15px;-webkit-text-stroke:0.2px #151515;">004</div><div class="abs t" style="z-index:40;left:335px;top:519.25px;font-size:13px;line-height:15px;color:#151515;font-weight:normal;letter-spacing:-0.15px;-webkit-text-stroke:0.2px #151515;">Dodavatel - školení 5</div><div class="abs t" style="z-index:40;left:556px;top:519.25px;font-size:13px;line-height:15px;color:#151515;font-weight:normal;letter-spacing:-0.15px;-webkit-text-stroke:0.2px #151515;">12345678</div><div class="abs t" style="z-index:40;left:656px;top:519.25px;font-size:13px;line-height:15px;color:#151515;font-weight:normal;letter-spacing:-0.15px;-webkit-text-stroke:0.2px #151515;">1. 6. 2025 12:54</div><div class="abs t" style="z-index:40;left:806px;top:519.25px;font-size:13px;line-height:15px;color:#151515;font-weight:normal;letter-spacing:-0.44px;-webkit-text-stroke:0.2px #151515;">Otevřena</div><svg class="abs" style="z-index:40;left:1013px;top:520px" width="10" height="10" viewBox="0 0 10 10"><path d="M1.9 1.6 L8.9 8.6 M8.9 1.6 L1.9 8.6" stroke="#d42a2a" stroke-width="1.85"/></svg><svg class="abs" style="z-index:40;left:1153px;top:520px" width="10" height="10" viewBox="0 0 10 10"><path d="M1.9 1.6 L8.9 8.6 M8.9 1.6 L1.9 8.6" stroke="#d42a2a" stroke-width="1.85"/></svg><svg class="abs" style="z-index:40;left:1313px;top:520px" width="10" height="10" viewBox="0 0 10 10"><path d="M1.9 1.6 L8.9 8.6 M8.9 1.6 L1.9 8.6" stroke="#d42a2a" stroke-width="1.85"/></svg><div class="abs" style="z-index:40;left:180px;top:539px;width:1223px;height:25px;border-bottom:1px solid #dcdcdc"></div><svg class="abs" style="z-index:40;left:192px;top:547px" width="18" height="8" viewBox="0 0 18 8"><circle cx="2.8" cy="4" r="1.45" fill="none" stroke="#2170ae" stroke-width="1.05"/><circle cx="9" cy="4" r="1.45" fill="none" stroke="#2170ae" stroke-width="1.05"/><circle cx="15.2" cy="4" r="1.45" fill="none" stroke="#2170ae" stroke-width="1.05"/></svg><svg class="abs" style="z-index:40;left:218px;top:543px" width="18" height="18" viewBox="0 0 18 18"><circle cx="8.9" cy="8" r="7.4" fill="none" stroke="#2170ae" stroke-width="1.15"/><circle cx="8.4" cy="4.4" r="0.75" fill="#2170ae"/><path d="M8.3 6.6 V10.6 Q8.3 11.9 9.8 12" fill="none" stroke="#2170ae" stroke-width="1.15"/></svg><div class="abs t" style="z-index:40;left:255px;top:544.25px;font-size:13px;line-height:15px;color:#151515;font-weight:normal;letter-spacing:-0.15px;-webkit-text-stroke:0.2px #151515;">005</div><div class="abs t" style="z-index:40;left:335px;top:544.25px;font-size:13px;line-height:15px;color:#151515;font-weight:normal;letter-spacing:-0.15px;-webkit-text-stroke:0.2px #151515;">Dodavatel - školení 6</div><div class="abs t" style="z-index:40;left:556px;top:544.25px;font-size:13px;line-height:15px;color:#151515;font-weight:normal;letter-spacing:-0.15px;-webkit-text-stroke:0.2px #151515;">45359326</div><div class="abs t" style="z-index:40;left:656px;top:544.25px;font-size:13px;line-height:15px;color:#151515;font-weight:normal;letter-spacing:-0.15px;-webkit-text-stroke:0.2px #151515;">1. 6. 2025 12:55</div><div class="abs t" style="z-index:40;left:806px;top:544.25px;font-size:13px;line-height:15px;color:#151515;font-weight:normal;letter-spacing:-0.44px;-webkit-text-stroke:0.2px #151515;">Otevřena</div><svg class="abs" style="z-index:40;left:1013px;top:545px" width="10" height="10" viewBox="0 0 10 10"><path d="M1.9 1.6 L8.9 8.6 M8.9 1.6 L1.9 8.6" stroke="#d42a2a" stroke-width="1.85"/></svg><svg class="abs" style="z-index:40;left:1153px;top:545px" width="10" height="10" viewBox="0 0 10 10"><path d="M1.9 1.6 L8.9 8.6 M8.9 1.6 L1.9 8.6" stroke="#d42a2a" stroke-width="1.85"/></svg><svg class="abs" style="z-index:40;left:1313px;top:545px" width="10" height="10" viewBox="0 0 10 10"><path d="M1.9 1.6 L8.9 8.6 M8.9 1.6 L1.9 8.6" stroke="#d42a2a" stroke-width="1.85"/></svg><div class="abs" style="z-index:40;left:180px;top:564px;width:1223px;height:25px;border-bottom:1px solid #dcdcdc"></div><svg class="abs" style="z-index:40;left:192px;top:572px" width="18" height="8" viewBox="0 0 18 8"><circle cx="2.8" cy="4" r="1.45" fill="none" stroke="#2170ae" stroke-width="1.05"/><circle cx="9" cy="4" r="1.45" fill="none" stroke="#2170ae" stroke-width="1.05"/><circle cx="15.2" cy="4" r="1.45" fill="none" stroke="#2170ae" stroke-width="1.05"/></svg><svg class="abs" style="z-index:40;left:218px;top:568px" width="18" height="18" viewBox="0 0 18 18"><circle cx="8.9" cy="8" r="7.4" fill="none" stroke="#2170ae" stroke-width="1.15"/><circle cx="8.4" cy="4.4" r="0.75" fill="#2170ae"/><path d="M8.3 6.6 V10.6 Q8.3 11.9 9.8 12" fill="none" stroke="#2170ae" stroke-width="1.15"/></svg><div class="abs t" style="z-index:40;left:255px;top:569.25px;font-size:13px;line-height:15px;color:#151515;font-weight:normal;letter-spacing:-0.15px;-webkit-text-stroke:0.2px #151515;">009</div><div class="abs t" style="z-index:40;left:335px;top:569.25px;font-size:13px;line-height:15px;color:#151515;font-weight:normal;letter-spacing:-0.15px;-webkit-text-stroke:0.2px #151515;">Dodavatel - školení 6</div><div class="abs t" style="z-index:40;left:556px;top:569.25px;font-size:13px;line-height:15px;color:#151515;font-weight:normal;letter-spacing:-0.15px;-webkit-text-stroke:0.2px #151515;">45359326</div><div class="abs t" style="z-index:40;left:656px;top:569.25px;font-size:13px;line-height:15px;color:#151515;font-weight:normal;letter-spacing:-0.15px;-webkit-text-stroke:0.2px #151515;">1. 6. 2025 12:58</div><div class="abs t" style="z-index:40;left:806px;top:569.25px;font-size:13px;line-height:15px;color:#151515;font-weight:normal;letter-spacing:-0.2px;-webkit-text-stroke:0.2px #151515;">Otevření zaevidováno</div><svg class="abs" style="z-index:40;left:1013px;top:570px" width="10" height="10" viewBox="0 0 10 10"><path d="M1.9 1.6 L8.9 8.6 M8.9 1.6 L1.9 8.6" stroke="#d42a2a" stroke-width="1.85"/></svg><svg class="abs" style="z-index:40;left:1153px;top:570px" width="11" height="9" viewBox="0 0 11 9"><path d="M1.8 4.9 L4.6 7.5 L10.4 1.5" fill="none" stroke="#33b83f" stroke-width="1.8"/></svg><svg class="abs" style="z-index:40;left:1313px;top:570px" width="10" height="10" viewBox="0 0 10 10"><path d="M1.9 1.6 L8.9 8.6 M8.9 1.6 L1.9 8.6" stroke="#d42a2a" stroke-width="1.85"/></svg><div class="abs" style="z-index:40;left:180px;top:589px;width:1223px;height:25px;border-bottom:1px solid #dcdcdc"></div><svg class="abs" style="z-index:40;left:192px;top:597px" width="18" height="8" viewBox="0 0 18 8"><circle cx="2.8" cy="4" r="1.45" fill="none" stroke="#2170ae" stroke-width="1.05"/><circle cx="9" cy="4" r="1.45" fill="none" stroke="#2170ae" stroke-width="1.05"/><circle cx="15.2" cy="4" r="1.45" fill="none" stroke="#2170ae" stroke-width="1.05"/></svg><svg class="abs" style="z-index:40;left:218px;top:593px" width="18" height="18" viewBox="0 0 18 18"><circle cx="8.9" cy="8" r="7.4" fill="none" stroke="#2170ae" stroke-width="1.15"/><circle cx="8.4" cy="4.4" r="0.75" fill="#2170ae"/><path d="M8.3 6.6 V10.6 Q8.3 11.9 9.8 12" fill="none" stroke="#2170ae" stroke-width="1.15"/></svg><div class="abs t" style="z-index:40;left:255px;top:594.25px;font-size:13px;line-height:15px;color:#151515;font-weight:normal;letter-spacing:-0.15px;-webkit-text-stroke:0.2px #151515;">006</div><div class="abs t" style="z-index:40;left:335px;top:594.25px;font-size:13px;line-height:15px;color:#151515;font-weight:normal;letter-spacing:-0.15px;-webkit-text-stroke:0.2px #151515;">Dodavatel - školení 7</div><div class="abs t" style="z-index:40;left:556px;top:594.25px;font-size:13px;line-height:15px;color:#151515;font-weight:normal;letter-spacing:-0.15px;-webkit-text-stroke:0.2px #151515;">12345678</div><div class="abs t" style="z-index:40;left:656px;top:594.25px;font-size:13px;line-height:15px;color:#151515;font-weight:normal;letter-spacing:-0.15px;-webkit-text-stroke:0.2px #151515;">1. 6. 2025 12:56</div><div class="abs t" style="z-index:40;left:806px;top:594.25px;font-size:13px;line-height:15px;color:#151515;font-weight:normal;letter-spacing:-0.44px;-webkit-text-stroke:0.2px #151515;">Otevřena</div><svg class="abs" style="z-index:40;left:1013px;top:595px" width="10" height="10" viewBox="0 0 10 10"><path d="M1.9 1.6 L8.9 8.6 M8.9 1.6 L1.9 8.6" stroke="#d42a2a" stroke-width="1.85"/></svg><svg class="abs" style="z-index:40;left:1153px;top:595px" width="10" height="10" viewBox="0 0 10 10"><path d="M1.9 1.6 L8.9 8.6 M8.9 1.6 L1.9 8.6" stroke="#d42a2a" stroke-width="1.85"/></svg><svg class="abs" style="z-index:40;left:1313px;top:595px" width="10" height="10" viewBox="0 0 10 10"><path d="M1.9 1.6 L8.9 8.6 M8.9 1.6 L1.9 8.6" stroke="#d42a2a" stroke-width="1.85"/></svg><div class="abs" style="z-index:40;left:180px;top:614px;width:1223px;height:25px;border-bottom:1px solid #dcdcdc"></div><svg class="abs" style="z-index:40;left:192px;top:622px" width="18" height="8" viewBox="0 0 18 8"><circle cx="2.8" cy="4" r="1.45" fill="none" stroke="#2170ae" stroke-width="1.05"/><circle cx="9" cy="4" r="1.45" fill="none" stroke="#2170ae" stroke-width="1.05"/><circle cx="15.2" cy="4" r="1.45" fill="none" stroke="#2170ae" stroke-width="1.05"/></svg><svg class="abs" style="z-index:40;left:218px;top:618px" width="18" height="18" viewBox="0 0 18 18"><circle cx="8.9" cy="8" r="7.4" fill="none" stroke="#2170ae" stroke-width="1.15"/><circle cx="8.4" cy="4.4" r="0.75" fill="#2170ae"/><path d="M8.3 6.6 V10.6 Q8.3 11.9 9.8 12" fill="none" stroke="#2170ae" stroke-width="1.15"/></svg><div class="abs t" style="z-index:40;left:255px;top:619.25px;font-size:13px;line-height:15px;color:#151515;font-weight:normal;letter-spacing:-0.15px;-webkit-text-stroke:0.2px #151515;">007</div><div class="abs t" style="z-index:40;left:335px;top:619.25px;font-size:13px;line-height:15px;color:#151515;font-weight:normal;letter-spacing:-0.15px;-webkit-text-stroke:0.2px #151515;">Dodavatel - školení 8</div><div class="abs t" style="z-index:40;left:556px;top:619.25px;font-size:13px;line-height:15px;color:#151515;font-weight:normal;letter-spacing:-0.15px;-webkit-text-stroke:0.2px #151515;">12345678</div><div class="abs t" style="z-index:40;left:656px;top:619.25px;font-size:13px;line-height:15px;color:#151515;font-weight:normal;letter-spacing:-0.15px;-webkit-text-stroke:0.2px #151515;">1. 6. 2025 12:57</div><div class="abs t" style="z-index:40;left:806px;top:619.25px;font-size:13px;line-height:15px;color:#151515;font-weight:normal;letter-spacing:-0.44px;-webkit-text-stroke:0.2px #151515;">Otevřena</div><svg class="abs" style="z-index:40;left:1013px;top:620px" width="10" height="10" viewBox="0 0 10 10"><path d="M1.9 1.6 L8.9 8.6 M8.9 1.6 L1.9 8.6" stroke="#d42a2a" stroke-width="1.85"/></svg><svg class="abs" style="z-index:40;left:1153px;top:620px" width="10" height="10" viewBox="0 0 10 10"><path d="M1.9 1.6 L8.9 8.6 M8.9 1.6 L1.9 8.6" stroke="#d42a2a" stroke-width="1.85"/></svg><svg class="abs" style="z-index:40;left:1313px;top:620px" width="11" height="9" viewBox="0 0 11 9"><path d="M1.8 4.9 L4.6 7.5 L10.4 1.5" fill="none" stroke="#33b83f" stroke-width="1.8"/></svg><div class="abs" style="z-index:40;left:1343px;top:377px;width:60px;height:262px;background:linear-gradient(to right,rgba(0,0,0,0),rgba(0,0,0,.09))"></div><div class="abs" style="z-index:40;left:180px;top:639px;width:1224px;height:13px;background:#f4f4f4;border-radius:0 0 7px 7px"></div><div class="abs" style="z-index:40;left:183px;top:641px;width:1213px;height:8px;background:#c1c1c1;border-radius:4px"></div></body></html>
